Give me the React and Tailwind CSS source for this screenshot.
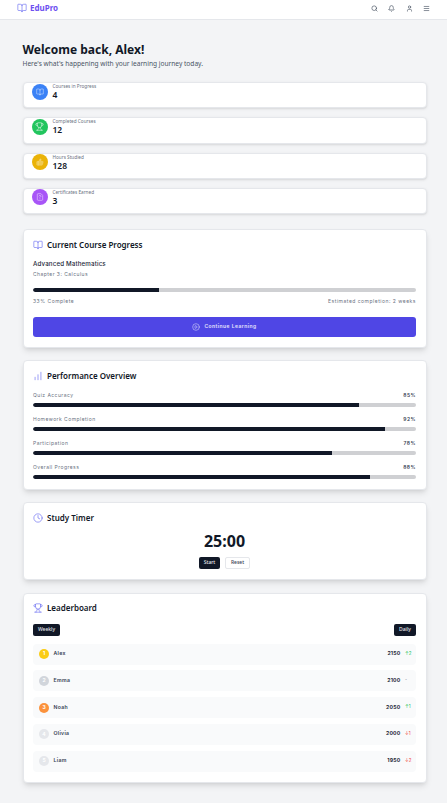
import { BookOpen, Trophy, ThumbsUp, FileQuestion, Search, Bell, User, Menu, PlayCircle, ChartNoAxesColumnIncreasing, Clock } from "lucide-react";

const stats = [
  { label: "Courses in Progress", value: "4", color: "bg-[#3b82f6]", Icon: BookOpen, iconClass: "h-2 w-2 text-white/80" },
  { label: "Completed Courses", value: "12", color: "bg-[#22c55e]", Icon: Trophy, iconClass: "h-[9px] w-[9px] text-white/85" },
  { label: "Hours Studied", value: "128", color: "bg-[#eab308]", Icon: ThumbsUp, iconClass: "h-2 w-2 fill-white/30 text-white/30" },
  { label: "Certificates Earned", value: "3", color: "bg-[#a855f7]", Icon: FileQuestion, iconClass: "h-2 w-2 text-white/85" },
];

const metrics = [
  { label: "Quiz Accuracy", value: 85 },
  { label: "Homework Completion", value: 92 },
  { label: "Participation", value: 78 },
  { label: "Overall Progress", value: 88 },
];

const players = [
  { name: "Alex", score: 2150, change: "↑2", badge: "bg-[#facc15]", changeColor: "text-[#22c55e]" },
  { name: "Emma", score: 2100, change: "-", badge: "bg-[#d1d5db]", changeColor: "text-gray-500" },
  { name: "Noah", score: 2050, change: "↑1", badge: "bg-[#fb923c]", changeColor: "text-[#22c55e]" },
  { name: "Olivia", score: 2000, change: "↓1", badge: "bg-[#e5e7eb]", changeColor: "text-[#ef4444]" },
  { name: "Liam", score: 1950, change: "↓2", badge: "bg-[#e5e7eb]", changeColor: "text-[#ef4444]" },
];

function Bar({ value }) {
  return (
    <div className="h-1 w-full overflow-hidden rounded-full bg-[#cfd0d3]">
      <div className="h-full rounded-l-full bg-[#111827]" style={{ width: `${value}%` }} />
    </div>
  );
}

function Card({ children, className = "" }) {
  return (
    <section className={`rounded border border-gray-200 bg-white px-[9.5px] pt-[9.5px] pb-2.5 shadow-md ${className}`}>
      {children}
    </section>
  );
}

function CardTitle({ Icon, children }) {
  return (
    <div className="flex h-2.5 items-center gap-1">
      <Icon className="h-2.5 w-2.5 text-[#6366f1]" strokeWidth={1.5} />
      <h2 className="text-[8px] leading-none font-semibold text-[#111827]">{children}</h2>
    </div>
  );
}

export default function App() {
  return (
    <div className="min-h-[803px] bg-[#f3f4f6] font-['Noto_Sans',sans-serif]">
      <nav className="flex h-[19.5px] items-start justify-between border-b border-gray-200 bg-white pt-[3px] pr-[17px] pl-[17px]">
        <div className="flex items-center gap-[3px]">
          <BookOpen className="h-2.5 w-2.5 text-[#6366f1]" strokeWidth={1.5} />
          <span className="text-[8px] leading-[10px] font-bold text-[#6d4ff0]">EduPro</span>
        </div>
        <div className="flex items-center gap-[10.5px] pt-[1.5px]">
          <Search className="h-[7px] w-[7px] text-gray-700" />
          <Bell className="h-[7px] w-[7px] text-gray-700" />
          <User className="h-[7px] w-[7px] text-gray-700" />
          <Menu className="h-[7px] w-[7px] text-gray-700" />
        </div>
      </nav>

      <main className="pt-[21px] pr-[20.5px] pb-[20px] pl-[22.5px]">
        <h1 className="text-[12px] leading-[18px] font-bold text-[#111827]">Welcome back, Alex!</h1>
        <p className="mt-[0.5px] text-[6.6px] leading-[9px] text-gray-600">
          Here's what's happening with your learning journey today.
        </p>

        <div className="mt-[14px] flex flex-col gap-[9px]">
          {stats.map(({ label, value, color, Icon, iconClass }) => (
            <div key={label} className="flex h-[26.33px] gap-[5px] rounded border border-gray-200 bg-white pl-2 shadow-sm">
              <div className={`mt-[0.5px] flex h-4 w-4 items-center justify-center rounded-full ${color}`}>
                <Icon className={iconClass} strokeWidth={1.5} />
              </div>
              <div>
                <div className="text-[4.7px] leading-[6px] text-gray-500">{label}</div>
                <div className="text-[8.5px] leading-[11px] font-semibold text-[#111827]">{value}</div>
              </div>
            </div>
          ))}
        </div>

        <Card className="mt-[15px]">
          <CardTitle Icon={BookOpen}>Current Course Progress</CardTitle>
          <div className="font-['Inter',sans-serif]">
            <h3 className="mt-[9.5px] text-[6.2px] leading-[9px] font-medium tracking-[0.15px] text-gray-800">Advanced Mathematics</h3>
            <p className="mt-[3px] text-[5px] leading-[7px] tracking-[0.45px] text-gray-500">Chapter 3: Calculus</p>
            <div className="mt-[9.5px]">
              <Bar value={33} />
            </div>
            <div className="mt-[6px] flex justify-between text-[5px] leading-[7px] tracking-[0.5px] text-gray-500">
              <span>33% Complete</span>
              <span>Estimated completion: 2 weeks</span>
            </div>
            <button className="mt-3 flex h-5 w-full items-center justify-center gap-1 rounded-[3px] bg-[#4f46e5] text-[5px] font-semibold tracking-[0.45px] text-white/85">
              <PlayCircle className="h-2 w-2" strokeWidth={1.5} />
              Continue Learning
            </button>
          </div>
        </Card>

        <Card className="mt-[12.5px]">
          <CardTitle Icon={ChartNoAxesColumnIncreasing}>Performance Overview</CardTitle>
          <div className="mt-[10.8px] flex flex-col gap-[9px] font-['Inter',sans-serif]">
            {metrics.map((m) => (
              <div key={m.label}>
                <div className="mb-1 flex justify-between text-[5px] leading-[7px] tracking-[0.45px]">
                  <span className="text-gray-500">{m.label}</span>
                  <span className="font-semibold text-gray-700">{m.value}%</span>
                </div>
                <Bar value={m.value} />
              </div>
            ))}
          </div>
        </Card>

        <Card className="mt-[12.5px]">
          <CardTitle Icon={Clock}>Study Timer</CardTitle>
          <div className="mt-[7.5px] text-center text-[16px] leading-[22px] font-bold text-[#111827]">25:00</div>
          <div className="mt-[5px] flex justify-center gap-[5px]">
            <button className="h-3 w-[21px] rounded-xs bg-[#111827] text-[5px] font-medium text-gray-200">Start</button>
            <button className="h-3 w-[25px] rounded-xs border border-gray-200 bg-white text-[5px] font-medium text-gray-700">Reset</button>
          </div>
        </Card>

        <Card className="mt-[12.5px]">
          <CardTitle Icon={Trophy}>Leaderboard</CardTitle>
          <div className="mt-[10.5px] flex justify-between">
            <button className="h-3 w-[27px] rounded-xs bg-[#111827] text-[5px] font-medium text-gray-200">Weekly</button>
            <button className="h-3 w-[22px] rounded-xs bg-[#111827] text-[5px] font-medium text-gray-200">Daily</button>
          </div>
          <div className="mt-2 flex flex-col gap-[5.75px] font-['Inter',sans-serif]">
            {players.map((p, i) => (
              <div key={p.name} className="flex h-[21px] items-center rounded bg-gray-50 px-[6px]">
                <div className={`flex h-2.5 w-2.5 items-center justify-center rounded-full text-[5px] font-bold text-white ${p.badge}`}>
                  {i + 1}
                </div>
                <span className="ml-[4.5px] text-[5.2px] font-semibold tracking-[0.3px] text-gray-700">{p.name}</span>
                <span className="ml-auto text-[5.2px] font-bold tracking-[0.2px] text-gray-800">{p.score}</span>
                <span className={`ml-[4.5px] w-[5px] text-[4.5px] ${p.changeColor}`}>{p.change}</span>
              </div>
            ))}
          </div>
        </Card>
      </main>
    </div>
  );
}
